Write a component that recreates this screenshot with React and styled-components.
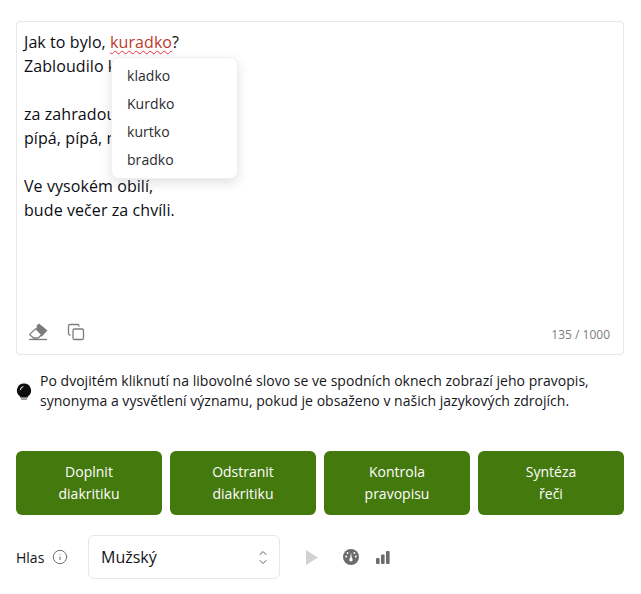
import React from 'react'
import styled, { createGlobalStyle } from 'styled-components'
import { Info, ChevronUp, ChevronDown, Copy } from 'lucide-react'

const GlobalStyle = createGlobalStyle`
    body {
        margin: 0;
        background: #fff;
        font-family: "Open Sans", "Noto Sans", sans-serif;
        color: #14141a;
    }
`;

const Page = styled.div`
    width: 608px;
    padding: 21px 17px 15px 16px;
`;

const Editor = styled.div`
    position: relative;
    height: 334px;
    box-sizing: border-box;
    border: 1px solid #e6e6e6;
    border-radius: 4px;
    padding: 8px 7px 10px;
    display: flex;
    flex-direction: column;
    justify-content: space-between;
`;

const EditorText = styled.div`
    font-size: 16px;
    line-height: 24px;
    letter-spacing: 0.08px;
    white-space: pre-line;
    color: #0c0c14;
`;

const Misspelled = styled.span`
    color: #c0392b;
    text-decoration: underline wavy #f0303f 1.25px;
    text-underline-offset: 2px;
`;

const Suggestions = styled.ul`
    position: absolute;
    left: 94px;
    top: 35px;
    width: 127px;
    box-sizing: border-box;
    margin: 0;
    padding: 4px 0;
    list-style: none;
    background: #fff;
    border: 1px solid #f0f0f0;
    border-radius: 8px;
    box-shadow: 0 4px 12px rgba(0, 0, 0, 0.12);
`;

const Suggestion = styled.li`
    height: 28px;
    line-height: 28px;
    padding-left: 15px;
    font-size: 14px;
    letter-spacing: 0.05px;
    color: #2b2b2f;
`;

const EditorFooter = styled.div`
    display: flex;
    align-items: center;
    justify-content: space-between;
    height: 24px;
    padding: 0 6px 0 4px;
`;

const Tools = styled.div`
    display: flex;
    align-items: center;
    gap: 18px;
`;

const Counter = styled.span`
    margin-top: 4px;
    font-size: 12px;
    color: #7d7d7d;
`;

const Hint = styled.div`
    display: flex;
    align-items: center;
    gap: 7px;
    margin-top: 16px;
    font-size: 14px;
    line-height: 20px;
    letter-spacing: 0.025px;
    color: #16161c;

    svg {
        flex-shrink: 0;
    }
`;

const Buttons = styled.div`
    display: grid;
    grid-template-columns: repeat(4, 1fr);
    gap: 8px;
    margin-top: 40px;
`;

const ActionButton = styled.button`
    height: 64px;
    border: 0;
    border-radius: 6px;
    background: #44790e;
    color: #fff;
    font-family: inherit;
    font-size: 14px;
    font-weight: 500;
    line-height: 22px;
    white-space: pre-line;
`;

const VoiceRow = styled.div`
    display: flex;
    align-items: center;
    margin-top: 20px;
    height: 44px;
`;

const VoiceLabel = styled.span`
    font-size: 14px;
    width: 29px;
`;

const InfoIcon = styled(Info)`
    margin-left: 7px;
    color: #6f6f6f;
`;

const Select = styled.div`
    display: flex;
    align-items: center;
    justify-content: space-between;
    box-sizing: border-box;
    width: 192px;
    height: 44px;
    margin-left: 20px;
    padding: 0 10px 0 12px;
    border: 1px solid #e6e6e6;
    border-radius: 6px;
    font-size: 16px;
    font-weight: 500;
`;

const Chevrons = styled.span`
    display: flex;
    flex-direction: column;
    color: #5f5f5f;

    svg + svg {
        margin-top: -3px;
    }
`;

const Player = styled.div`
    display: flex;
    align-items: center;
    gap: 17px;
    margin-left: 26px;

    svg:first-child {
        margin-right: 8px;
    }
`;

const Eraser = () => (
    <svg width="21" height="18" viewBox="0 0 21 18">
        <path d="M9 2.2 11 .6 19.5 7.4 13.6 13.8 8 8Z" fill="#7b7b7b" />
        <path d="M1.6 11.4 7.8 5.6 13.6 11.6 10.2 15H5.4Z" fill="#fff" stroke="#7b7b7b" strokeWidth="1.3" strokeLinejoin="round" />
        <path d="M1 16.5H19" stroke="#7b7b7b" strokeWidth="1.3" />
    </svg>
);

const Bulb = () => (
    <svg width="17" height="20" viewBox="0 0 17 20">
        <path d="M8 2.5a7 7 0 0 0-3.8 12.9V16.5h7.6v-1.1A7 7 0 0 0 8 2.5Z" fill="#0d0d0d" />
        <path d="M5 18h6" stroke="#666" strokeWidth="1.2" />
        <path d="M4.4 9a3.6 3.6 0 0 1 3-3.4" stroke="#fff" strokeWidth="1" fill="none" />
    </svg>
);

const Play = () => (
    <svg width="12" height="15" viewBox="0 0 12 15">
        <path d="M0 0 12 7.5 0 15Z" fill="#d2d2d2" />
    </svg>
);

const Gauge = () => (
    <svg width="16" height="16" viewBox="0 0 16 16">
        <circle cx="8" cy="8" r="8" fill="#6c6c6c" />
        <path d="M7 10 8 3.5 9 10Z" fill="#fff" />
        <circle cx="8" cy="10.8" r="1.7" fill="#fff" />
        <circle cx="3.2" cy="7.6" r="1" fill="#fff" />
        <circle cx="12.8" cy="7.6" r="1" fill="#fff" />
        <circle cx="4.6" cy="4" r="0.9" fill="#fff" />
        <circle cx="11.4" cy="4" r="0.9" fill="#fff" />
    </svg>
);

const Bars = () => (
    <svg width="14" height="13" viewBox="0 0 14 13">
        <rect x="0" y="7" width="3.6" height="6" rx="1" fill="#6c6c6c" />
        <rect x="5" y="3.5" width="3.6" height="9.5" rx="1" fill="#6c6c6c" />
        <rect x="10" y="0" width="3.6" height="13" rx="1" fill="#6c6c6c" />
    </svg>
);

const App = () => {
    return (
        <Page>
            <GlobalStyle />
            <Editor>
                <EditorText>
                    Jak to bylo, <Misspelled>kuradko</Misspelled>?{'\n'}
                    Zabloudilo kuřátko{'\n\n'}
                    za zahradou v žitě,{'\n'}
                    pípá, pípá, maminku{'\n\n'}
                    Ve vysokém obilí,{'\n'}
                    bude večer za chvíli.
                </EditorText>
                <Suggestions>
                    <Suggestion>kladko</Suggestion>
                    <Suggestion>Kurdko</Suggestion>
                    <Suggestion>kurtko</Suggestion>
                    <Suggestion>bradko</Suggestion>
                </Suggestions>
                <EditorFooter>
                    <Tools>
                        <Eraser />
                        <Copy size={18} color="#7b7b7b" strokeWidth={1.7} />
                    </Tools>
                    <Counter>135 / 1000</Counter>
                </EditorFooter>
            </Editor>
            <Hint>
                <Bulb />
                <span>
                    Po dvojitém kliknutí na libovolné slovo se ve spodních oknech zobrazí jeho pravopis,
                    synonyma a vysvětlení významu, pokud je obsaženo v našich jazykových zdrojích.
                </span>
            </Hint>
            <Buttons>
                <ActionButton>{'Doplnit\ndiakritiku'}</ActionButton>
                <ActionButton>{'Odstranit\ndiakritiku'}</ActionButton>
                <ActionButton>{'Kontrola\npravopisu'}</ActionButton>
                <ActionButton>{'Syntéza\nřeči'}</ActionButton>
            </Buttons>
            <VoiceRow>
                <VoiceLabel>Hlas</VoiceLabel>
                <InfoIcon size={16} strokeWidth={1.5} />
                <Select>
                    Mužský
                    <Chevrons>
                        <ChevronUp size={12} strokeWidth={2} />
                        <ChevronDown size={12} strokeWidth={2} />
                    </Chevrons>
                </Select>
                <Player>
                    <Play />
                    <Gauge />
                    <Bars />
                </Player>
            </VoiceRow>
        </Page>
    );
}

export default App;
